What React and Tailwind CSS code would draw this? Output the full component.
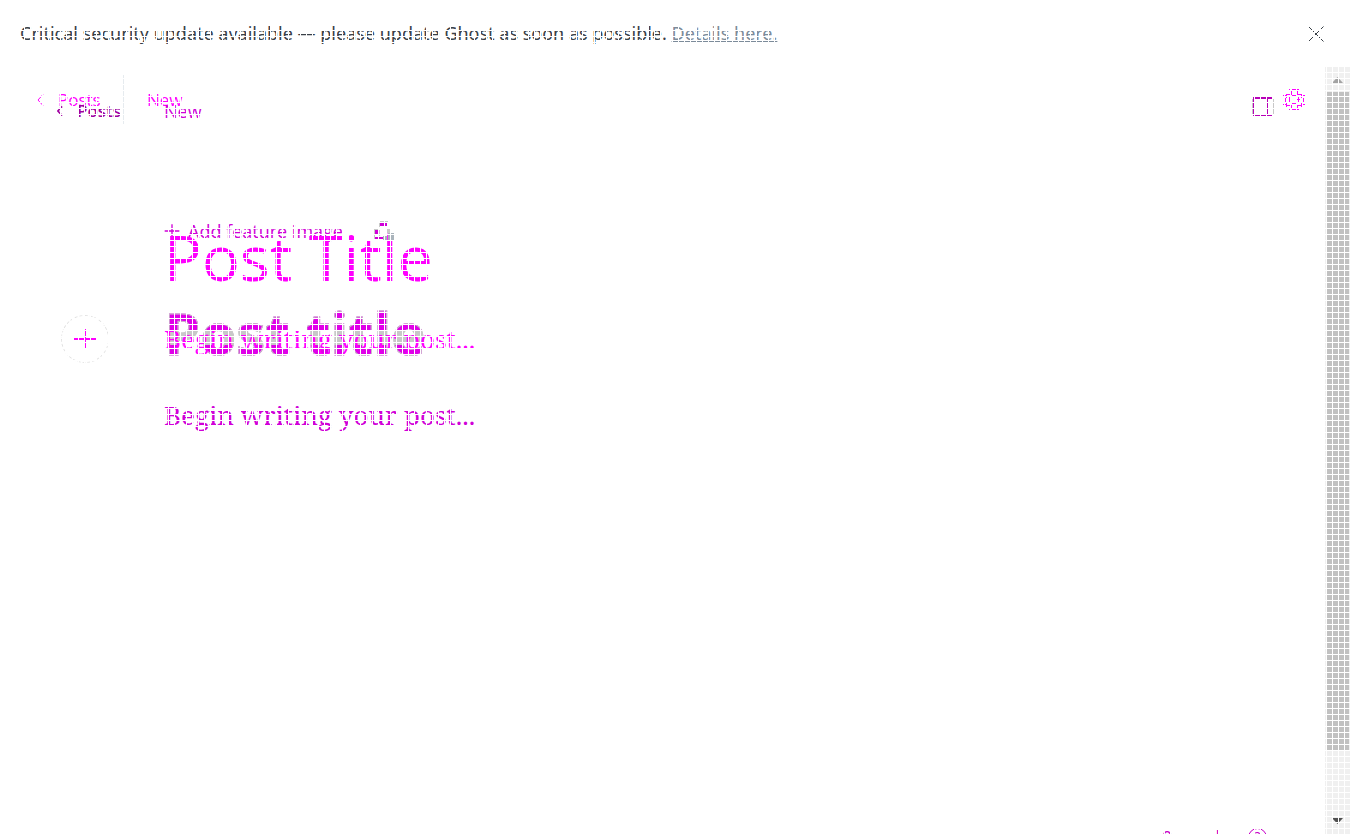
const grid =
  "pointer-events-none absolute inset-0 z-50 bg-[repeating-linear-gradient(to_right,#fff_0px,#fff_1px,transparent_1px,transparent_6px),repeating-linear-gradient(to_bottom,#fff_0px,#fff_1px,transparent_1px,transparent_6px)]";

function Chevron({ className, strokeWidth = 1 }) {
  return (
    <svg className={className} viewBox="0 0 7 12" fill="none" stroke="currentColor" strokeWidth={strokeWidth} aria-hidden="true">
      <path d="M6 .5 1 6l5 5.500" />
    </svg>
  );
}

function Plus({ className }) {
  return (
    <svg className={className} viewBox="0 0 24 24" fill="none" stroke="currentColor" strokeWidth="2" aria-hidden="true">
      <path d="M12 2v20M1 12h22" />
    </svg>
  );
}

function Gear() {
  return (
    <svg className="size-[22px]" viewBox="0 0 22 22" fill="#f0f" shapeRendering="crispEdges" aria-hidden="true">
      <path d="M6 0h2v1H6zM9 0h4v1H9zM14 0h2v1h-2zM8 1h1v5H8zM14 1h1v5h-1zM3 5h5v1H3zM15 5h4v1h-4zM3 5h1v4H3zM18 5h1v4h-1zM0 6h3v1H0zM19 6h3v1h-3zM9 6h5v1H9zM6 8h1v6H6zM15 8h1v6h-1zM14 10h3v1h-3zM2 9h1v4H2zM20 9h1v4h-1zM9 14h5v1H9zM3 14h1v4H3zM18 14h1v4h-1zM0 15h3v1H0zM19 15h3v1h-3zM3 16h5v1H3zM15 16h4v1h-4zM8 16h1v4H8zM14 16h1v4h-1zM6 20h2v1H6zM9 20h4v1H9zM14 20h2v1h-2z" />
    </svg>
  );
}

function PanelIcon() {
  return (
    <svg className="h-[19px] w-[22px]" viewBox="0 0 22 19" shapeRendering="crispEdges" aria-hidden="true">
      <path fill="#c8c8c8" d="M0 2h1v15H0zM21 2h1v15h-1z" />
      <path fill="#b800b8" d="M1 0h19v2H1zM1 18h19v1H1zM1 2h1v16H1zM15 2h1v16h-1z" />
    </svg>
  );
}

function Trash() {
  return (
    <svg className="h-5 w-[21px]" viewBox="0 0 21 20" shapeRendering="crispEdges" aria-hidden="true">
      <path fill="#c8c8c8" d="M6 0h8v1H6zM5 2h1v4H5zM0 8h5v1H0zM0 9h1v9H0zM5 9h1v6H5zM13 7h3v5h-3z" />
      <path fill="#d000d8" d="M6 2h7v3H6zM1 9h3v4H1zM1 16h9v2H1z" />
      <path fill="#aab4bc" d="M14 12h6v7h-6zM9 15h4v4H9z" />
    </svg>
  );
}

function Banner() {
  return (
    <div className="flex h-[67px] shrink-0 items-center justify-between pr-[26px] pl-5 font-['Noto_Sans',sans-serif] text-[18px] text-[#394047]">
      <p>
        Critical security update available — please update Ghost as soon as possible.{" "}
        <a href="#details" className="text-[#7c8b9a] underline">Details here.</a>
      </p>
      <button type="button" aria-label="Close" className="text-[#394047]">
        <svg className="size-4" viewBox="0 0 16 16" fill="none" stroke="currentColor" aria-hidden="true">
          <path d="M.5 .5l15 15M15.500 .5l-15 15" />
        </svg>
      </button>
    </div>
  );
}

function Scrollbar() {
  return (
    <div className="flex w-[25px] shrink-0 flex-col bg-[#f0f0f0]" aria-hidden="true">
      <div className="flex h-[25px] items-center justify-center">
        <svg className="h-[6px] w-[11px]" viewBox="0 0 11 6" fill="#a3a3a3"><path d="M5.500 0 11 6H0z" /></svg>
      </div>
      <div className="mr-px ml-[2px] grow bg-[#c1c1c1]" />
      <div className="flex h-[84px] items-end justify-center pb-[10px]">
        <svg className="h-[6px] w-[11px]" viewBox="0 0 11 6" fill="#505050"><path d="M0 0h11L5.500 6z" /></svg>
      </div>
    </div>
  );
}

export default function App() {
  return (
    <div className="relative flex h-screen flex-col overflow-hidden bg-white font-['Open_Sans','Noto_Sans',sans-serif]">
      <Banner />
      <div className="flex min-h-0 grow">
        <main className="relative min-w-0 grow overflow-hidden">
          <header className="flex h-[58px] items-start justify-between pt-2 pr-5 pl-[37px]">
            <div className="flex text-[17px] leading-6 text-[#f0f]">
              <a href="#posts" className="flex w-[87px] items-center gap-[14px] border-r border-[#e6ebef] pt-[13px] pb-3">
                <Chevron className="h-3 w-[7px]" />Posts
              </a>
              <span className="pt-[13px] pl-[23px]">New</span>
            </div>
            <div className="flex items-start gap-[9px] pt-[14px]">
              <button type="button" aria-label="Preview" className="pt-2"><PanelIcon /></button>
              <button type="button" aria-label="Settings"><Gear /></button>
            </div>
          </header>
          <div className="absolute top-8 left-[57px] flex text-[17px] leading-6">
            <a href="#posts" className="flex w-[107px] items-center gap-[14px] font-semibold text-[#a000a0]">
              <Chevron className="h-[10px] w-[6px]" strokeWidth={2} />Posts
            </a>
            <span className="text-[18px] text-[#d000d8]">New</span>
          </div>

          <section className="pt-[94px] pl-[164px]">
            <button type="button" className="flex items-center gap-2 text-[18px] leading-6 text-[#d000d8]">
              <Plus className="size-4" />Add feature image
            </button>
            <h1 className="-mt-6 text-[63px] leading-[76px] font-medium text-[#f0f]">Post Title</h1>
            <h1 className="bg-[linear-gradient(to_bottom,#e000e8_36px,#c8c8c8_36px,#c8c8c8_50px,#e000e8_50px)] bg-clip-text text-[58px] leading-[76px] font-bold text-transparent [-webkit-text-stroke:1px_#c8c8c8]">Post title</h1>
            <p className="mt-[25px] font-['Noto_Serif',serif] text-[26px] leading-[38px] text-[#d000d8]">Begin writing your post...</p>
          </section>
          <p className="absolute top-[253px] left-[164px] font-['Noto_Serif',serif] text-[26px] leading-[38px] text-[#f0f]">Begin writing your post...</p>
          <button type="button" aria-label="Remove title" className="absolute top-[154px] left-[374px]"><Trash /></button>
          <button type="button" aria-label="Add a card" className="absolute top-[248px] left-[61px] flex size-12 items-center justify-center rounded-full border border-dashed border-[#e2e2e2] text-[#f0f]">
            <Plus className="size-6" />
          </button>
          <div className="absolute top-[758px] left-[1162px] flex items-center text-[18px] leading-6 text-[#c800c8]">
            <span className="w-[86px]">0 words</span>
            <span className="size-[19px] rounded-full border border-[#c800c8] text-center text-[14px] leading-4">?</span>
          </div>
        </main>
        <Scrollbar />
      </div>
      <div className={grid} />
    </div>
  );
}
